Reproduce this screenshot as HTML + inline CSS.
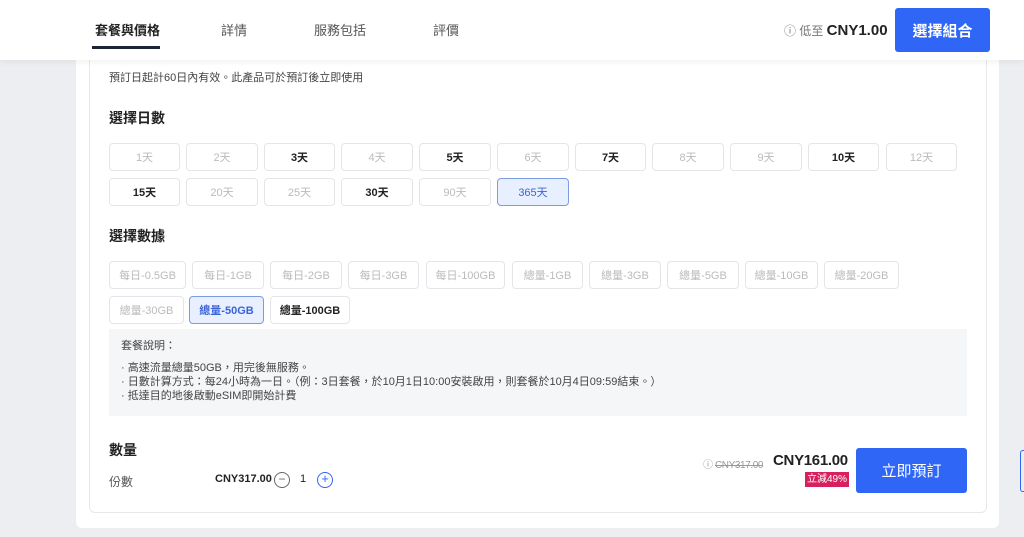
<!DOCTYPE html>
<html><head><meta charset="utf-8"><style>
*{margin:0;padding:0;box-sizing:border-box}
body{width:1024px;height:537px;background:#eceef1;font-family:"Liberation Sans","Noto Sans CJK TC",sans-serif;position:relative;overflow:hidden;color:#222}
.hdr{position:absolute;left:0;top:0;width:1024px;height:60px;background:#fff;box-shadow:0 2px 6px rgba(0,0,0,.06);z-index:2}
.tab{position:absolute;top:20px;font-size:13px;color:#555}
.outer{position:absolute;left:76px;top:40px;width:923px;height:488px;background:#fff;border-radius:6px}
.inner{position:absolute;left:89px;top:40px;width:898px;height:473px;background:#fff;border:1px solid #e6e8eb;border-radius:6px}
.a{position:absolute}
.b{position:absolute;height:28px;border:1px solid #e3e5e8;border-radius:4px;background:#fff;font-size:11px;color:#bbb;display:flex;align-items:center;justify-content:center}
.b.on{color:#222;font-weight:bold}
.b.sel{background:#e8efff;border-color:#7d9be0;color:#3a64d8}
h3{position:absolute;font-size:14px;font-weight:bold;color:#222}
</style></head><body>
<div class="hdr">
<div class="tab" style="left:95px;color:#222;font-weight:bold">套餐與價格</div>
<div class="a" style="left:92px;top:46px;width:68px;height:3px;background:#1b2538"></div>
<div class="tab" style="left:221px">詳情</div>
<div class="tab" style="left:314px">服務包括</div>
<div class="tab" style="left:433px">評價</div>
<div class="a" style="left:784px;top:22px;font-size:12px;color:#777">ⓘ 低至 <b style="font-size:15px;color:#222">CNY1.00</b></div>
<div class="a" style="left:895px;top:8px;width:95px;height:44px;background:#2f66f6;border-radius:3px;color:#fff;font-size:15px;font-weight:bold;display:flex;align-items:center;justify-content:center">選擇組合</div>
</div>
<div class="outer"></div>
<div class="inner"></div>
<div class="a" style="left:109px;top:69px;font-size:11px;color:#444">預訂日起計60日內有效。此產品可於預訂後立即使用</div>
<h3 style="left:109px;top:108px">選擇日數</h3>
<div class="b" style="left:109px;top:143px;width:71px">1天</div>
<div class="b" style="left:186px;top:143px;width:72px">2天</div>
<div class="b on" style="left:264px;top:143px;width:71px">3天</div>
<div class="b" style="left:341px;top:143px;width:72px">4天</div>
<div class="b on" style="left:419px;top:143px;width:72px">5天</div>
<div class="b" style="left:497px;top:143px;width:72px">6天</div>
<div class="b on" style="left:575px;top:143px;width:71px">7天</div>
<div class="b" style="left:652px;top:143px;width:72px">8天</div>
<div class="b" style="left:730px;top:143px;width:72px">9天</div>
<div class="b on" style="left:808px;top:143px;width:71px">10天</div>
<div class="b" style="left:886px;top:143px;width:71px">12天</div>
<div class="b on" style="left:109px;top:178px;width:71px">15天</div>
<div class="b" style="left:186px;top:178px;width:72px">20天</div>
<div class="b" style="left:264px;top:178px;width:71px">25天</div>
<div class="b on" style="left:341px;top:178px;width:72px">30天</div>
<div class="b" style="left:419px;top:178px;width:72px">90天</div>
<div class="b sel" style="left:497px;top:178px;width:72px">365天</div>
<h3 style="left:109px;top:226px">選擇數據</h3>
<div class="b" style="left:109px;top:261px;width:77px">每日-0.5GB</div>
<div class="b" style="left:192px;top:261px;width:72px">每日-1GB</div>
<div class="b" style="left:270px;top:261px;width:72px">每日-2GB</div>
<div class="b" style="left:348px;top:261px;width:71px">每日-3GB</div>
<div class="b" style="left:426px;top:261px;width:79px">每日-100GB</div>
<div class="b" style="left:512px;top:261px;width:71px">總量-1GB</div>
<div class="b" style="left:589px;top:261px;width:72px">總量-3GB</div>
<div class="b" style="left:667px;top:261px;width:72px">總量-5GB</div>
<div class="b" style="left:745px;top:261px;width:73px">總量-10GB</div>
<div class="b" style="left:824px;top:261px;width:75px">總量-20GB</div>
<div class="b" style="left:109px;top:296px;width:75px">總量-30GB</div>
<div class="b sel" style="left:189px;top:296px;width:75px;font-weight:bold">總量-50GB</div>
<div class="b on" style="left:270px;top:296px;width:80px">總量-100GB</div>
<div class="a" style="left:109px;top:329px;width:858px;height:87px;background:#f5f6f8;font-size:11px;color:#444;padding:10px 0 0 12px;line-height:14px">套餐說明：<div style="height:8px"></div>· 高速流量總量50GB，用完後無服務。<br>· 日數計算方式：每24小時為一日。（例：3日套餐，於10月1日10:00安裝啟用，則套餐於10月4日09:59結束。）<br>· 抵達目的地後啟動eSIM即開始計費</div>
<h3 style="left:109px;top:440px">數量</h3>
<div class="a" style="left:109px;top:473px;font-size:12px;color:#555">份數</div>
<div class="a" style="left:215px;top:473px;font-size:11px;font-weight:bold">CNY317.00</div>
<div class="a" style="left:274px;top:472px;width:16px;height:16px;border:1.5px solid #666;border-radius:50%;font-size:12px;line-height:12px;text-align:center;color:#666">−</div>
<div class="a" style="left:300px;top:473px;font-size:11px">1</div>
<div class="a" style="left:317px;top:472px;width:16px;height:16px;border:1.5px solid #2f66f6;border-radius:50%;font-size:13px;line-height:12px;text-align:center;color:#2f66f6">+</div>
<div class="a" style="left:703px;top:456px;font-size:10px;color:#999;letter-spacing:-0.4px">ⓘ <s>CNY317.00</s></div>
<div class="a" style="left:773px;top:452px;font-size:15px;font-weight:bold;letter-spacing:-0.3px">CNY161.00</div>
<div class="a" style="left:805px;top:472px;width:44px;height:15px;background:#d6205f;color:#fff;font-size:10px;text-align:center;line-height:15px">立減49%</div>
<div class="a" style="left:856px;top:448px;width:111px;height:45px;background:#2f66f6;border-radius:3px;color:#fff;font-size:15px;display:flex;align-items:center;justify-content:center">立即預訂</div>
<div class="a" style="left:1020px;top:450px;width:4px;height:42px;border:1px solid #2f66f6;border-right:none;border-radius:3px 0 0 3px"></div>
</body></html>
